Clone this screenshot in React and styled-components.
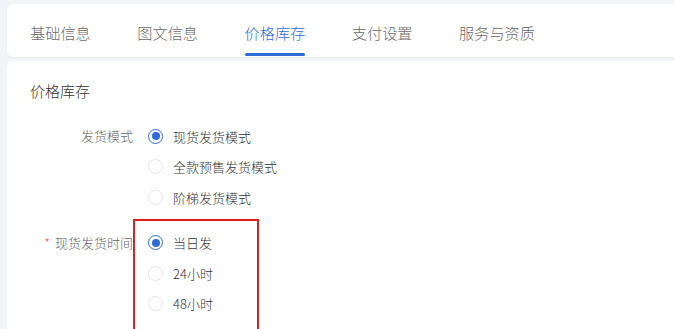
import React from "react";
import styled, { createGlobalStyle } from "styled-components";

const Global = createGlobalStyle`
  html, body { margin: 0; padding: 0; background: #f3f4f7; }
  body { font-family: "Noto Sans CJK SC", "Noto Sans", sans-serif; overflow: hidden; font-weight: 300; }
  * { box-sizing: border-box; }
`;

const Page = styled.div`
  padding: 4px 0 0 7px;
  width: 674px;
  height: 329px;
  overflow: hidden;
  display: flex;
  flex-direction: column;
  gap: 4px;
`;

const TabCard = styled.div`
  flex: none;
  background: #fff;
  border-radius: 6px 0 0 6px;
  height: 53px;
  display: flex;
  align-items: stretch;
  padding-left: 23px;
  gap: 46.5px;
  box-shadow: 0 1px 2px rgba(0, 0, 0, 0.05);
`;

const Tab = styled.div`
  position: relative;
  display: flex;
  align-items: center;
  padding-top: 2px;
  font-size: 15.2px;
  color: ${(p) => (p.$active ? "#2f6bd6" : "#6a6a6a")};
  &::after {
    content: "";
    display: ${(p) => (p.$active ? "block" : "none")};
    position: absolute;
    left: 0;
    right: 0;
    bottom: 1px;
    height: 3px;
    border-radius: 2px;
    background: #2f6bd6;
  }
`;

const Content = styled.div`
  flex: 1;
  background: #fff;
  border-radius: 6px 0 0 0;
  padding: 19px 0 0 23px;
`;

const Title = styled.div`
  font-size: 15px;
  line-height: 22px;
  color: #333;
`;

const Form = styled.div`
  margin-top: 19px;
  display: flex;
  flex-direction: column;
  gap: 15px;
`;

const Field = styled.div`
  display: flex;
  align-items: flex-start;
`;

const Label = styled.div`
  width: 103px;
  text-align: right;
  font-size: 13px;
  line-height: 30px;
  color: #666;
  white-space: nowrap;
  margin-right: 15px;
`;

const Star = styled.span`
  color: #f0565a;
  margin-right: 5px;
`;

const Group = styled.div`
  position: relative;
  display: flex;
  flex-direction: column;
  ${(p) =>
    p.$highlight &&
    `
    &::before {
      content: "";
      position: absolute;
      left: -15px;
      top: -9px;
      width: 122px;
      height: 112px;
      border: 2px solid #e01f1f;
      pointer-events: none;
    }
  `}
`;

const Option = styled.label`
  display: flex;
  align-items: center;
  height: 30.5px;
  font-size: 13px;
  color: #333;
  gap: 10px;
`;

const Circle = styled.span`
  width: 15px;
  height: 15px;
  border-radius: 50%;
  border: 1px solid ${(p) => (p.$checked ? "#2f6bd6" : "#e6e6e9")};
  display: flex;
  align-items: center;
  justify-content: center;
  &::after {
    content: "";
    width: 8px;
    height: 8px;
    border-radius: 50%;
    background: #2f6bd6;
    display: ${(p) => (p.$checked ? "block" : "none")};
  }
`;

const tabs = ["基础信息", "图文信息", "价格库存", "支付设置", "服务与资质"];

function Radio({ options, checked }) {
  return options.map((o, i) => (
    <Option key={o}>
      <Circle $checked={i === checked} />
      {o}
    </Option>
  ));
}

export default function App() {
  return (
    <>
      <Global />
      <Page>
        <TabCard>
          {tabs.map((t) => (
            <Tab key={t} $active={t === "价格库存"}>
              {t}
            </Tab>
          ))}
        </TabCard>
        <Content>
          <Title>价格库存</Title>
          <Form>
            <Field>
              <Label>发货模式</Label>
              <Group>
                <Radio options={["现货发货模式", "全款预售发货模式", "阶梯发货模式"]} checked={0} />
              </Group>
            </Field>
            <Field>
              <Label>
                <Star>*</Star>现货发货时间
              </Label>
              <Group $highlight>
                <Radio options={["当日发", "24小时", "48小时"]} checked={0} />
              </Group>
            </Field>
          </Form>
        </Content>
      </Page>
    </>
  );
}
